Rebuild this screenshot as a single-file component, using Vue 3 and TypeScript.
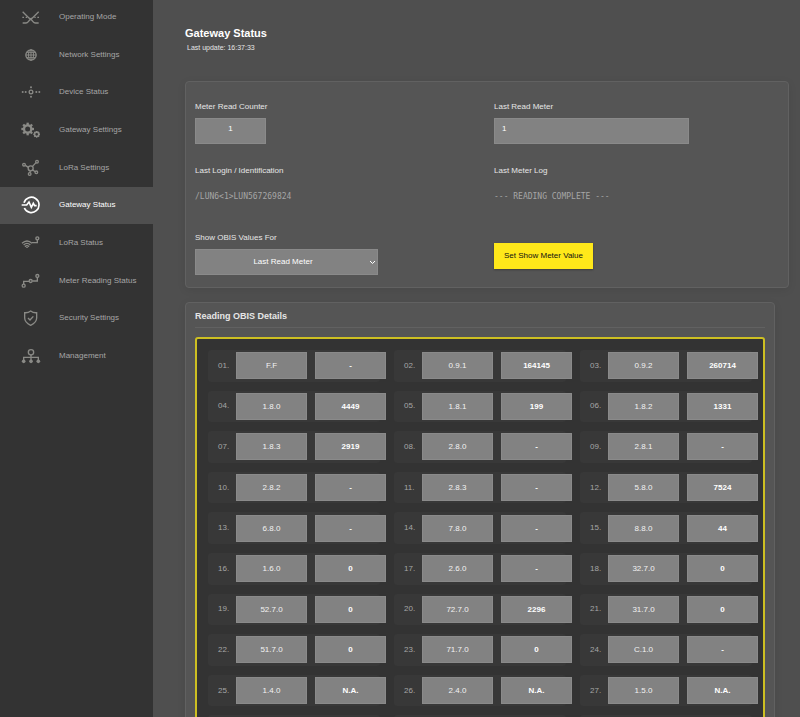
<script setup lang="ts">
import { ref } from 'vue'

type IconName =
  | 'mode' | 'globe' | 'device' | 'gears' | 'nodes'
  | 'pulse' | 'signal' | 'route' | 'shield' | 'tree'

interface NavItem {
  label: string
  icon: IconName
}

interface ObisEntry {
  code: string
  value: string
}

const navItems: NavItem[] = [
  { label: 'Operating Mode', icon: 'mode' },
  { label: 'Network Settings', icon: 'globe' },
  { label: 'Device Status', icon: 'device' },
  { label: 'Gateway Settings', icon: 'gears' },
  { label: 'LoRa Settings', icon: 'nodes' },
  { label: 'Gateway Status', icon: 'pulse' },
  { label: 'LoRa Status', icon: 'signal' },
  { label: 'Meter Reading Status', icon: 'route' },
  { label: 'Security Settings', icon: 'shield' },
  { label: 'Management', icon: 'tree' },
]

const active = ref('Gateway Status')
const selectedMeter = ref('Last Read Meter')

const entries: ObisEntry[] = [
  { code: 'F.F', value: '-' },
  { code: '0.9.1', value: '164145' },
  { code: '0.9.2', value: '260714' },
  { code: '1.8.0', value: '4449' },
  { code: '1.8.1', value: '199' },
  { code: '1.8.2', value: '1331' },
  { code: '1.8.3', value: '2919' },
  { code: '2.8.0', value: '-' },
  { code: '2.8.1', value: '-' },
  { code: '2.8.2', value: '-' },
  { code: '2.8.3', value: '-' },
  { code: '5.8.0', value: '7524' },
  { code: '6.8.0', value: '-' },
  { code: '7.8.0', value: '-' },
  { code: '8.8.0', value: '44' },
  { code: '1.6.0', value: '0' },
  { code: '2.6.0', value: '-' },
  { code: '32.7.0', value: '0' },
  { code: '52.7.0', value: '0' },
  { code: '72.7.0', value: '2296' },
  { code: '31.7.0', value: '0' },
  { code: '51.7.0', value: '0' },
  { code: '71.7.0', value: '0' },
  { code: 'C.1.0', value: '-' },
  { code: '1.4.0', value: 'N.A.' },
  { code: '2.4.0', value: 'N.A.' },
  { code: '1.5.0', value: 'N.A.' },
  { code: '', value: '' },
  { code: '', value: '' },
  { code: '', value: '' },
]

// Slots without a code stay blank, number included.
const numberFor = (entry: ObisEntry, index: number): string =>
  entry.code ? String(index + 1).padStart(2, '0') + '.' : ''

const teeth = [0, 45, 90, 135, 180, 225, 270, 315]
</script>

<template>
  <div class="app">
    <aside class="sidebar">
      <nav class="nav" aria-label="Main">
        <a
          v-for="item in navItems"
          :key="item.label"
          href="#"
          class="nav-link"
          :class="{ active: item.label === active }"
          @click.prevent="active = item.label"
        >
          <svg class="icon" viewBox="0 0 60 54" aria-hidden="true">
            <g v-if="item.icon === 'mode'">
              <path d="M5 11 L23 29 Q29 35 35 29 L53 11 M5 45 H15 Q19 45 22 41 L26 36 Q29 33 32 36 L36 41 Q39 45 43 45 H53" />
              <path class="fill" d="M4 26h5v4H4zM14 26h4v4h-4zM40 26h4v4h-4zM49 26h5v4h-5z" />
            </g>
            <g v-else-if="item.icon === 'globe'">
              <circle cx="30" cy="27" r="15.500" />
              <ellipse class="fine" cx="30" cy="27" rx="7.500" ry="15.500" />
              <path class="fine" d="M30 11V43M15 27H45M18 19H42M18 35H42" />
            </g>
            <g v-else-if="item.icon === 'device'">
              <circle cx="30" cy="27" r="5.500" />
              <g class="fill">
                <circle cx="5" cy="27" r="3" /><circle cx="14" cy="27" r="3" />
                <circle cx="46" cy="27" r="3" /><circle cx="55" cy="27" r="3" />
                <circle cx="30" cy="13" r="3" /><circle cx="30" cy="41" r="3" />
              </g>
            </g>
            <g v-else-if="item.icon === 'gears'">
              <circle cx="20" cy="24" r="11" class="heavy" />
              <rect v-for="t in teeth" :key="t" class="fill" x="16.500" y="5" width="7" height="7" :transform="`rotate(${t} 20 24)`" />
              <circle cx="47" cy="40" r="6.500" class="bold" />
              <rect v-for="t in teeth" :key="'s' + t" class="fill" x="45" y="30" width="4" height="4" :transform="`rotate(${t} 47 40)`" />
            </g>
            <g v-else-if="item.icon === 'nodes'">
              <circle cx="29" cy="28" r="7.500" />
              <circle cx="9" cy="17" r="4" /><circle cx="48" cy="8" r="4" />
              <circle cx="26" cy="45" r="4" /><circle cx="46" cy="40" r="4" />
              <path d="M13 19L22 25M45 11L34 23M28 36L27 41M35 32L42 38" />
            </g>
            <g v-else-if="item.icon === 'pulse'">
              <path class="bold" d="M9 20 A23 23 0 1 1 10 36" />
              <path class="bold" d="M2 27H17L24 18L31 34L37 22L41 29H47" />
            </g>
            <g v-else-if="item.icon === 'signal'">
              <path d="M3 28Q18 14 33 28M8 33Q18 23 28 33M12 38Q18 32 24 38" />
              <ellipse class="fill" cx="18" cy="40" rx="3" ry="2" />
              <path d="M33 26H49V18" />
              <circle cx="49" cy="13" r="4.500" />
            </g>
            <g v-else-if="item.icon === 'route'">
              <circle cx="8" cy="41" r="4.500" /><circle cx="29" cy="27" r="4.500" /><circle cx="49" cy="12" r="4.500" />
              <path d="M8 36V28H24M34 27H49V17" />
            </g>
            <g v-else-if="item.icon === 'shield'">
              <path d="M29 6Q37 12 47 11V27Q47 40 29 49Q11 40 11 27V11Q21 12 29 6Z" />
              <path d="M21 27L27 33L37 22" />
            </g>
            <g v-else>
              <circle cx="30" cy="16" r="8" />
              <path d="M30 24V42M8 42V31H52V42" />
              <g class="fill">
                <circle cx="8" cy="43" r="5.500" /><circle cx="30" cy="43" r="5.500" /><circle cx="52" cy="43" r="5.500" />
              </g>
            </g>
          </svg>
          <span>{{ item.label }}</span>
        </a>
      </nav>
    </aside>

    <main class="main">
      <header class="head">
        <h1>Gateway Status</h1>
        <p>Last update: 16:37:33</p>
      </header>

      <section class="panel form">
        <div class="field">
          <label for="counter">Meter Read Counter</label>
          <input id="counter" class="input short" type="text" value="1" readonly />
        </div>
        <div class="field">
          <label for="meter">Last Read Meter</label>
          <input id="meter" class="input wide" type="text" value="1" readonly />
        </div>
        <div class="field">
          <span>Last Login / Identification</span>
          <output class="log">/LUN6&lt;1&gt;LUN567269824</output>
        </div>
        <div class="field">
          <span>Last Meter Log</span>
          <output class="log">--- READING COMPLETE ---</output>
        </div>
        <div class="field">
          <label for="show">Show OBIS Values For</label>
          <div class="select-wrap">
            <select id="show" v-model="selectedMeter">
              <option>Last Read Meter</option>
            </select>
            <svg class="chevron" viewBox="0 0 7 5" aria-hidden="true"><path d="M1 1L3.500 3.500L6 1" /></svg>
          </div>
        </div>
        <div class="action">
          <button type="button">Set Show Meter Value</button>
        </div>
      </section>

      <section class="panel details">
        <h2>Reading OBIS Details</h2>
        <ol class="obis">
          <li v-for="(entry, i) in entries" :key="i" class="entry">
            <span class="num">{{ numberFor(entry, i) }}</span>
            <span class="cell">{{ entry.code }}</span>
            <span class="cell value">{{ entry.value }}</span>
          </li>
        </ol>
      </section>
    </main>
  </div>
</template>

<style>
body {
  margin: 0;
  background: #4f4f4f;
}
</style>

<style scoped>
* {
  box-sizing: border-box;
}

.app {
  display: flex;
  height: 100vh;
  overflow: hidden;
  background: #4f4f4f;
  color: #e6e6e6;
  font-family: Arial, "Liberation Sans", sans-serif;
  font-size: 8px;
  line-height: 10px;
}

.sidebar {
  flex: 0 0 153px;
  background: #333;
  overflow: hidden;
}

.nav {
  display: grid;
  grid-auto-rows: 1fr;
  min-height: 377px;
  margin-top: -2px;
}

.nav-link {
  display: flex;
  align-items: center;
  gap: 18px;
  padding-left: 21px;
  color: #a6a6a6;
  text-decoration: none;
}

.nav-link.active {
  background: #4f4f4f;
  color: #fff;
}

.icon {
  width: 20px;
  height: 18px;
  fill: none;
  stroke: #8a8a86;
  stroke-width: 4;
}

.icon .fill {
  fill: #8a8a86;
  stroke: none;
}

.icon .fine {
  stroke-width: 3;
}

.icon .bold {
  stroke-width: 5;
}

.icon .heavy {
  stroke-width: 7;
}

.active .icon {
  stroke: #fff;
}

.active .icon .fill {
  fill: #fff;
}

.main {
  flex: 1;
  min-width: 0;
  padding: 26px 11px 0 32px;
  overflow-y: auto;
  scrollbar-width: none;
}

.head {
  height: 55px;
}

h1,
h2,
p {
  margin: 0;
}

h1 {
  color: #fff;
  font-size: 11px;
  line-height: 14px;
}

.head p {
  padding: 3px 0 0 2px;
  font-size: 7px;
}

.panel {
  border: 1px solid #616161;
  border-radius: 4px;
  background: #555;
  box-shadow: 0 2px 8px rgba(0, 0, 0, 0.08);
}

.form {
  display: grid;
  grid-template-columns: 1fr 1fr;
  column-gap: 14px;
  row-gap: 22px;
  padding: 20px 9px 12px;
}

.field {
  display: flex;
  flex-direction: column;
  gap: 6px;
}

.input,
select {
  height: 26px;
  margin: 0;
  border: 1px solid #8a8a8a;
  border-radius: 0;
  background: #828282;
  color: #fff;
  font: inherit;
  outline: none;
}

.input {
  padding: 0 7px 6px;
}

.short {
  width: 71px;
  text-align: center;
}

.wide {
  width: 195px;
}

.log {
  height: 29px;
  line-height: 29px;
  color: #a6a6a6;
  font-family: "DejaVu Sans Mono", monospace;
  font-size: 8px;
}

.select-wrap {
  position: relative;
  width: 183px;
}

select {
  display: block;
  width: 100%;
  padding: 0 7px 0 0;
  appearance: none;
  text-align: center;
  text-align-last: center;
}

.chevron {
  position: absolute;
  top: 11px;
  right: 2px;
  width: 7px;
  height: 5px;
  fill: none;
  stroke: #fff;
  pointer-events: none;
}

.action {
  padding-top: 10px;
}

button {
  height: 26px;
  padding: 0 10px;
  border: 0;
  background: #ffe81a;
  box-shadow: 0 1px 2px rgba(0, 0, 0, 0.3);
  color: #111;
  font: inherit;
}

.details {
  margin: 14px 14px 0 0;
  padding: 6px 9px 9px;
}

h2 {
  padding-bottom: 4px;
  border-bottom: 1px solid #616161;
  color: #e6e6e6;
  font-size: 9px;
  line-height: 14px;
}

.obis {
  display: grid;
  grid-template-columns: repeat(3, 1fr);
  grid-auto-rows: 1fr;
  gap: 9px 14px;
  min-height: 423px;
  margin: 9px 0 0;
  padding: 11px;
  border: 2px solid #cdbf22;
  border-radius: 3px;
  background: #333;
  list-style: none;
}

.entry {
  display: flex;
  align-items: center;
  min-width: 0;
  padding-left: 10px;
  border-radius: 3px;
  background: #383838;
}

.num {
  flex: 0 0 18px;
  color: #a6a6a6;
}

.cell {
  flex: 0 0 71px;
  height: 27px;
  border: 1px solid #8a8a8a;
  background: #828282;
  color: #f2f2f2;
  line-height: 25px;
  text-align: center;
}

.value {
  margin-left: 8px;
  color: #fff;
  font-weight: 700;
}
</style>
